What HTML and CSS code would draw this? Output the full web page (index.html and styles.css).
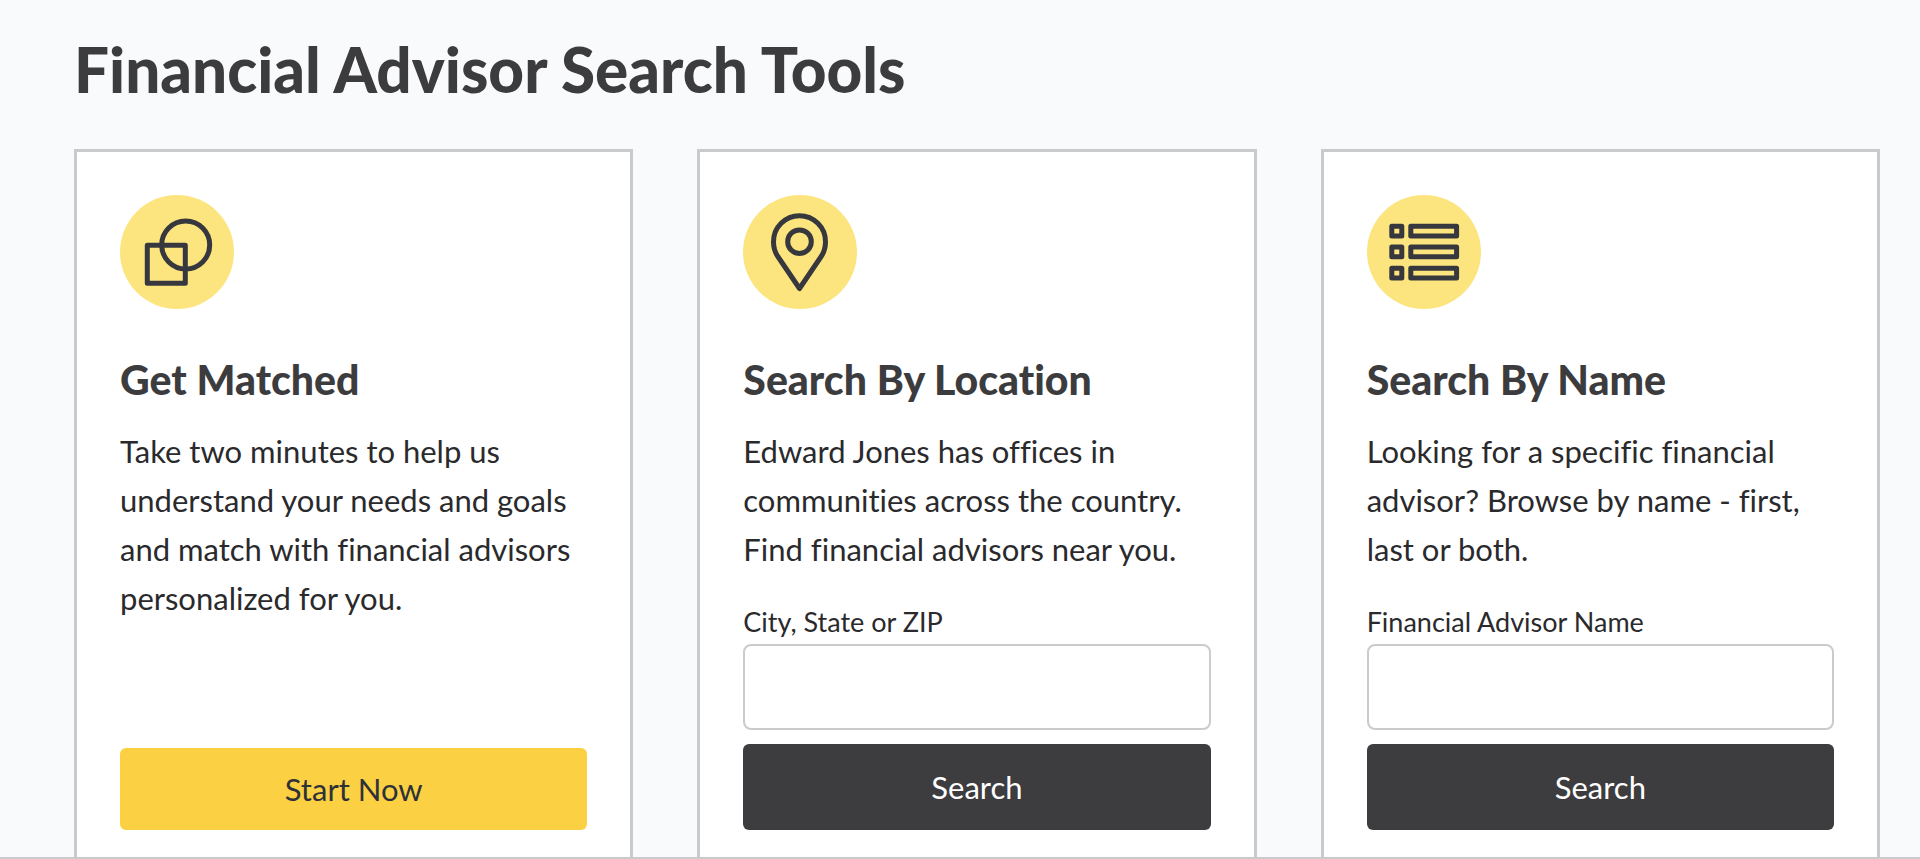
FILE: index.html
```
<!DOCTYPE html>
<html lang="en">
<head>
  <meta charset="UTF-8" />
  <meta name="viewport" content="width=device-width, initial-scale=1.0" />
  <title>Financial Advisor Search Tools</title>
  <link rel="stylesheet" href="styles.css">
</head>
<body>
  <main class="search-tools">
    <h1 class="page-title">Financial Advisor Search Tools</h1>

    <div class="cards">
      <!-- Get Matched -->
      <section class="card">
        <svg class="card-icon" viewBox="0 0 114 114" aria-hidden="true">
          <circle class="icon-bg" cx="57" cy="57" r="57" />
          <rect x="27.3" y="50.3" width="38" height="38" />
          <circle cx="65.7" cy="50" r="24" />
        </svg>
        <h2 class="card-title">Get Matched</h2>
        <p class="card-text">Take two minutes to help us understand your needs and goals and match with financial advisors personalized for you.</p>
        <button type="button" class="btn btn-primary">Start Now</button>
      </section>

      <!-- Search By Location -->
      <section class="card">
        <svg class="card-icon" viewBox="0 0 114 114" aria-hidden="true">
          <circle class="icon-bg" cx="57" cy="57" r="57" />
          <path d="M56.5 93.5 L34.5 61 C32 57 30.5 52.5 30.5 46.7 A26 26 0 0 1 82.5 46.7 C82.5 52.5 81 57 78.5 61 Z" />
          <circle cx="56.5" cy="46.7" r="11.8" />
        </svg>
        <h2 class="card-title">Search By Location</h2>
        <p class="card-text">Edward Jones has offices in communities across the country. Find financial advisors near you.</p>
        <form class="card-form">
          <label for="location">City, State or ZIP</label>
          <input type="text" id="location" name="location" />
          <button type="button" class="btn btn-dark">Search</button>
        </form>
      </section>

      <!-- Search By Name -->
      <section class="card">
        <svg class="card-icon" viewBox="0 0 114 114" aria-hidden="true">
          <circle class="icon-bg" cx="57" cy="57" r="57" />
          <rect x="24.8" y="31.2" width="10" height="9.7" />
          <rect x="43.8" y="31.2" width="45.8" height="9.7" />
          <rect x="24.8" y="52.1" width="10" height="9.7" />
          <rect x="43.8" y="52.1" width="45.8" height="9.7" />
          <rect x="24.8" y="73.2" width="10" height="9.7" />
          <rect x="43.8" y="73.2" width="45.8" height="9.7" />
        </svg>
        <h2 class="card-title">Search By Name</h2>
        <p class="card-text">Looking for a specific financial advisor? Browse by name - first, last or both.</p>
        <form class="card-form">
          <label for="advisor-name">Financial Advisor Name</label>
          <input type="text" id="advisor-name" name="advisor-name" />
          <button type="button" class="btn btn-dark">Search</button>
        </form>
      </section>
    </div>
  </main>
</body>
</html>
```
FILE: styles.css
```
* {
  box-sizing: border-box;
}

body {
  margin: 0;
  background-color: #f9fafc;
  color: #2a2a2d;
  font-family: Lato, "Open Sans", sans-serif;
  font-size: 31px;
  line-height: 49px;
  font-variant-ligatures: none;
}

.search-tools {
  padding: 33px 40px 0 74px;
  border-bottom: 2px solid #c9cacb;
}

.page-title {
  margin: 0 0 43px;
  font-size: 62px;
  line-height: 73px;
  font-weight: 900;
  color: #3c3c3f;
}

.cards {
  display: grid;
  grid-template-columns: repeat(3, 1fr);
  gap: 64px;
}

/* Cards run down into the rule under the section */
.card {
  display: flex;
  flex-direction: column;
  padding: 43px 43px 27px;
  background-color: #fff;
  border: 3px solid #c9cacb;
  border-bottom: none;
}

.card-icon {
  width: 114px;
  height: 114px;
  fill: none;
  stroke: #37383d;
  stroke-width: 5;
  stroke-linejoin: round;
}

.icon-bg {
  fill: #fce57f;
  stroke: none;
}

.card-title {
  margin: 47px 0 23px;
  font-size: 41px;
  line-height: 48px;
  font-weight: 900;
  color: #3c3c3f;
}

.card-text {
  margin: 0 0 32px;
}

.card-form {
  display: flex;
  flex-direction: column;
  margin-top: auto;
}

.card-form label {
  font-size: 27px;
  line-height: 32px;
  margin-bottom: 6px;
}

.card-form input {
  width: 100%;
  height: 86px;
  margin-bottom: 14px;
  padding: 0 20px;
  border: 2px solid #cbcbcc;
  border-radius: 8px;
  background-color: #fff;
  color: inherit;
  font: inherit;
}

.btn {
  width: 100%;
  height: 86px;
  padding: 0;
  border: none;
  border-radius: 6px;
  font: inherit;
  cursor: pointer;
}

.btn-primary {
  height: 82px;
  margin-top: auto;
  background-color: #fbd042;
  color: #2f3138;
}

.btn-dark {
  background-color: #3d3c3f;
  color: #fff;
}
```
